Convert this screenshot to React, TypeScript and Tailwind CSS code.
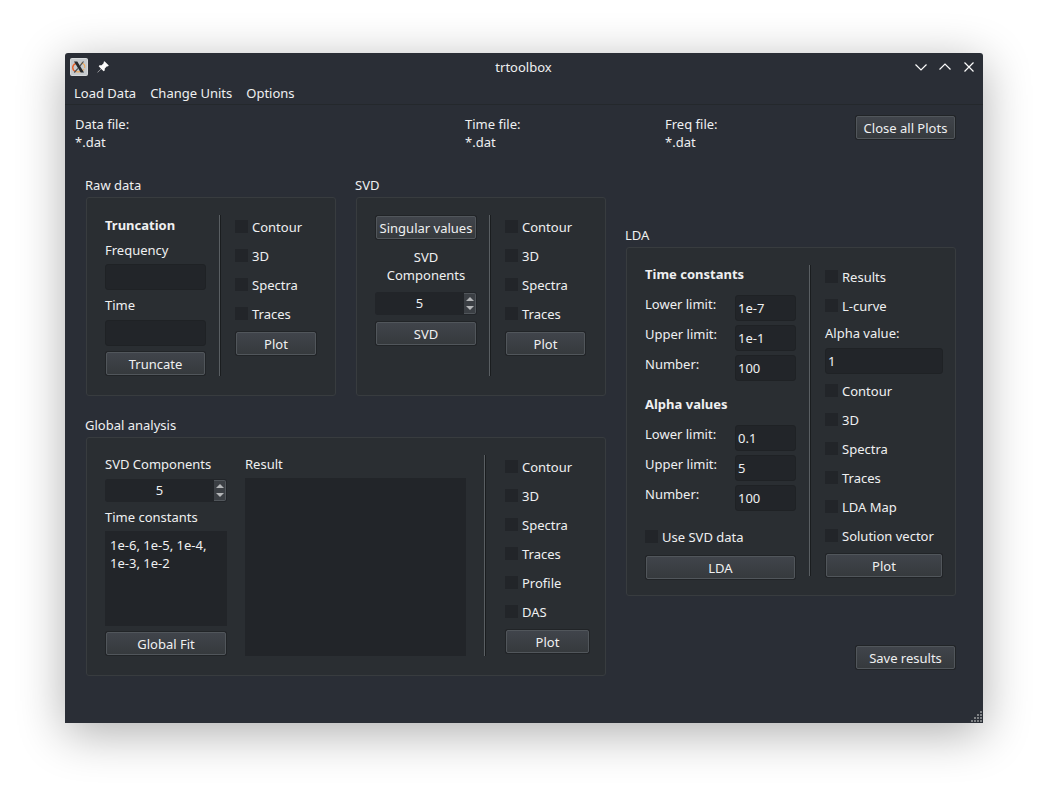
import React, { useId } from "react";

function Button({ children, className = "" }: { children: React.ReactNode; className?: string }) {
  return (
    <button
      type="button"
      className={`mx-px block h-[23px] rounded-[2px] border border-[#51565b] bg-linear-to-b from-[#40444b] to-[#363a3d] pt-px text-center leading-[20px] whitespace-nowrap shadow-[0_0_0_1px_#212427] hover:border-[#3daee9] ${className}`}
    >
      {children}
    </button>
  );
}

function Check({ label }: { label: string }) {
  return (
    <label className="flex items-start gap-1 leading-[18px] whitespace-nowrap">
      <input
        type="checkbox"
        className="mt-[2px] size-[13px] shrink-0 appearance-none bg-[#222529] checked:bg-[#3daee9]"
      />
      {label}
    </label>
  );
}

function Checks({ labels }: { labels: string[] }) {
  return (
    <div className="flex flex-col gap-[11px]">
      {labels.map((l) => (
        <Check key={l} label={l} />
      ))}
    </div>
  );
}

function Field({ id, value = "", className = "" }: { id: string; value?: string; className?: string }) {
  return (
    <input
      id={id}
      type="text"
      defaultValue={value}
      className={`block h-[26px] w-full min-w-0 rounded-[3px] border border-[#1f2225] bg-[#222529] px-[2px] outline-none focus:border-[#3daee9] ${className}`}
    />
  );
}

function Spin({ id, className = "" }: { id: string; className?: string }) {
  return (
    <div className={`flex h-[23px] min-w-0 rounded-[3px] bg-[#222529] ${className}`}>
      <input
        id={id}
        type="text"
        inputMode="numeric"
        defaultValue="5"
        className="w-0 min-w-0 flex-1 bg-transparent pt-px text-center outline-none"
      />
      <div className="my-px mr-px flex w-3 shrink-0 flex-col rounded-r-[2px] border-y border-r border-[#51565b] bg-[#3b3f44]">
        <button type="button" aria-label="Increase" className="flex flex-1 items-center justify-center">
          <svg width="8" height="4" viewBox="0 0 8 4" fill="#b4b6b8">
            <path d="M0 4 4 0l4 4z" />
          </svg>
        </button>
        <button type="button" aria-label="Decrease" className="flex flex-1 items-center justify-center">
          <svg width="8" height="4" viewBox="0 0 8 4" fill="#b4b6b8">
            <path d="M0 0h8L4 4z" />
          </svg>
        </button>
      </div>
    </div>
  );
}

function Divider({ className = "" }: { className?: string }) {
  return <div className={`w-[2px] border-r border-l border-r-[#1a1d1f] border-l-[#5a5f63] ${className}`} />;
}

function Group({ title, className, children }: { title: string; className: string; children: React.ReactNode }) {
  const id = useId();
  return (
    <section aria-labelledby={id} className="flex min-w-0 flex-col">
      <h2 id={id} className="leading-[18px]">
        {title}
      </h2>
      <div
        className={`mt-[3px] ml-px grid flex-1 rounded-[3px] border border-[#383c3f] bg-[#2a2e32] pt-[17px] ${className}`}
      >
        {children}
      </div>
    </section>
  );
}

function RawData() {
  return (
    <Group title="Raw data" className="grid-cols-[101fr_3px_82fr] gap-[13px] px-[18px] pb-[19px]">
      <div>
        <h3 className="leading-[20px] font-bold">Truncation</h3>
        <label htmlFor="freq" className="mt-[6px] block leading-[18px]">
          Frequency
        </label>
        <Field id="freq" className="mt-[5px]" />
        <label htmlFor="time" className="mt-[6px] block leading-[18px]">
          Time
        </label>
        <Field id="time" className="mt-[6px]" />
        <div className="mt-[6px] grid pb-px">
          <Button>Truncate</Button>
        </div>
      </div>
      <Divider />
      <div className="grid content-start gap-[9px] pt-[3px]">
        <Checks labels={["Contour", "3D", "Spectra", "Traces"]} />
        <Button>Plot</Button>
      </div>
    </Group>
  );
}

function Svd() {
  return (
    <Group title="SVD" className="grid-cols-[102fr_3px_82fr] gap-x-[12px] pr-[19px] pb-[19px] pl-[18px]">
      <div className="grid grid-cols-1 content-start pt-px">
        <Button>Singular values</Button>
        <label htmlFor="svd-n" className="mt-[9px] text-center leading-[18px]">
          SVD
          <br />
          Components
        </label>
        <Spin id="svd-n" className="mt-2" />
        <div className="mt-[7px] grid">
          <Button>SVD</Button>
        </div>
      </div>
      <Divider />
      <div className="grid content-start gap-[9px] pt-[3px] pl-px">
        <Checks labels={["Contour", "3D", "Spectra", "Traces"]} />
        <Button>Plot</Button>
      </div>
    </Group>
  );
}

function GlobalAnalysis() {
  return (
    <Group
      title="Global analysis"
      className="grid-cols-[122fr_221fr_3px_85fr] gap-[18px] pr-[15px] pb-[19px] pl-[18px]"
    >
      <div className="min-w-0">
        <label htmlFor="ga-n" className="block leading-[18px]">
          SVD Components
        </label>
        <Spin id="ga-n" className="mt-[6px]" />
        <label htmlFor="ga-t" className="mt-[6px] block leading-[18px]">
          Time constants
        </label>
        <textarea
          id="ga-t"
          defaultValue="1e-6, 1e-5, 1e-4, 1e-3, 1e-2"
          className="mt-[5px] block h-[95px] w-full resize-none bg-[#222529] px-[5px] py-[5px] leading-[18px] outline-none"
        />
        <div className="mt-[6px] grid pb-px">
          <Button>Global Fit</Button>
        </div>
      </div>
      <div className="flex min-w-0 flex-col">
        <label htmlFor="ga-r" className="leading-[18px]">
          Result
        </label>
        <textarea id="ga-r" readOnly className="mt-[5px] block w-full flex-1 resize-none bg-[#222529] outline-none" />
      </div>
      <Divider />
      <div className="grid content-start gap-[9px] pt-[3px]">
        <Checks labels={["Contour", "3D", "Spectra", "Traces", "Profile", "DAS"]} />
        <Button>Plot</Button>
      </div>
    </Group>
  );
}

function Limits({ title, prefix, values }: { title: string; prefix: string; values: string[] }) {
  return (
    <div>
      <h3 className="leading-[18px] font-bold">{title}</h3>
      <div className="mt-3 grid grid-cols-[90fr_61fr] gap-y-1">
        {["Lower limit:", "Upper limit:", "Number:"].map((l, i) => (
          <React.Fragment key={l}>
            <label htmlFor={`${prefix}-${i}`} className="leading-[18px]">
              {l}
            </label>
            <Field id={`${prefix}-${i}`} value={values[i]} />
          </React.Fragment>
        ))}
      </div>
    </div>
  );
}

function Lda() {
  return (
    <Group title="LDA" className="grid-cols-[151fr_3px_118fr] gap-x-[13px] pr-[12px] pb-[16px] pl-[18px]">
      <div>
        <Limits title="Time constants" prefix="tc" values={["1e-7", "1e-1", "100"]} />
        <div className="mt-[14px]">
          <Limits title="Alpha values" prefix="av" values={["0.1", "5", "100"]} />
        </div>
        <div className="mt-[17px] grid gap-[10px]">
          <Check label="Use SVD data" />
          <Button>LDA</Button>
        </div>
      </div>
      <Divider className="mb-[3px]" />
      <div className="grid content-start gap-[9px] pt-[3px]">
        <Checks labels={["Results", "L-curve"]} />
        <div className="grid gap-2">
          <div>
            <label htmlFor="alpha" className="block leading-[18px]">
              Alpha value:
            </label>
            <Field id="alpha" value="1" className="mt-[6px]" />
          </div>
          <Checks labels={["Contour", "3D", "Spectra", "Traces", "LDA Map", "Solution vector"]} />
        </div>
        <Button>Plot</Button>
      </div>
    </Group>
  );
}

function TitleBar() {
  return (
    <header className="grid h-7 grid-cols-[1fr_auto_1fr] items-center pr-[6px] pl-[5px]">
      <div className="flex items-center gap-2">
        <svg width="18" height="18" viewBox="0 0 18 18">
          <rect x="0.5" y="0.5" width="17" height="17" rx="1" fill="#c6cacd" stroke="#d6d9db" />
          <path d="M6 5.400C1.700 7 1.500 12 6 13.600" fill="none" stroke="#e8622a" strokeWidth="1.400" />
          <path
            d="M6 13.600c3 .8 6.300-.2 8.100-2.200M11 5c3 .2 4.300 2.400 3.600 5"
            fill="none"
            stroke="#eda95c"
            strokeWidth="1.200"
          />
          <path d="M4 3.500h3.300l6.700 11h-3.300z" fill="#26292c" />
          <path d="M13.500 3.500 9.800 8.200M8 10.300l-3.700 4.200" stroke="#4b4f53" strokeWidth="1.200" />
        </svg>
        <button type="button" aria-label="Keep on all desktops">
          <svg width="14" height="14" viewBox="0 0 14 14" fill="#fcfcfc">
            <path d="M8.500 1.200 12.800 5.500 11.800 6.400 11 6.200 8.800 8.400 8.700 10.500 7.700 11.300 5.200 8.900 2 12.300 1.300 12.700 1.700 12 5 8.700 2.700 6.300 3.500 5.300 5.600 5.200 7.800 3 7.600 2.100z" />
          </svg>
        </button>
      </div>
      <h1 className="leading-[18px]">trtoolbox</h1>
      <div className="flex justify-end gap-2 text-[#fcfcfc]">
        {[
          ["Minimize", "M2.500 5.500 8 11l5.500-5.500"],
          ["Maximize", "M2.500 10.500 8 5l5.500 5.500"],
          ["Close", "M3.500 3.500l9 9m0-9-9 9"],
        ].map(([name, d]) => (
          <button key={name} type="button" aria-label={name}>
            <svg width="16" height="16" viewBox="0 0 16 16" fill="none" stroke="currentColor" strokeWidth="1.200">
              <path d={d} />
            </svg>
          </button>
        ))}
      </div>
    </header>
  );
}

const grip = [
  [9, 0],
  [6, 3],
  [9, 3],
  [3, 6],
  [6, 6],
  [9, 6],
  [0, 9],
  [3, 9],
  [6, 9],
  [9, 9],
];

export default function App() {
  return (
    <div className="min-h-screen bg-white px-[65px] pt-[53px] pb-[77px] font-['Noto_Sans',sans-serif] text-[13px] text-[#eff0f1]">
      <main className="relative rounded-t-[3px] bg-[#2a2e36] shadow-[0_10px_48px_rgba(0,0,0,0.32)]">
        <TitleBar />
        <nav className="flex h-6 items-center gap-[14px] border-b border-[#24282c] px-[9px]">
          {["Load Data", "Change Units", "Options"].map((m) => (
            <button key={m} type="button" className="leading-[18px]">
              {m}
            </button>
          ))}
        </nav>
        <div className="grid grid-cols-[390fr_200fr_291fr] pt-[10px] pr-[27px] pl-[10px]">
          {["Data file:", "Time file:"].map((t) => (
            <p key={t} className="leading-[18px]">
              {t}
              <br />
              *.dat
            </p>
          ))}
          <div className="flex items-start justify-between">
            <p className="leading-[18px]">
              Freq file:
              <br />
              *.dat
            </p>
            <div className="pt-px">
              <Button className="w-[99px]">Close all Plots</Button>
            </div>
          </div>
        </div>
        <div className="grid grid-cols-[521fr_331fr] gap-x-[19px] pt-[25px] pr-[27px] pb-[47px] pl-5">
          <div className="grid min-w-0 content-start gap-y-5">
            <div className="grid grid-cols-2 gap-x-[19px]">
              <RawData />
              <Svd />
            </div>
            <GlobalAnalysis />
          </div>
          <div className="pt-[50px]">
            <Lda />
            <div className="mt-[50px] flex justify-end">
              <Button className="w-[99px]">Save results</Button>
            </div>
          </div>
        </div>
        <svg width="12" height="12" viewBox="0 0 12 12" className="absolute right-0 bottom-0" fill="#7d8083">
          {grip.map(([x, y]) => (
            <rect key={`${x}-${y}`} x={x} y={y} width="2" height="2" />
          ))}
        </svg>
      </main>
    </div>
  );
}
